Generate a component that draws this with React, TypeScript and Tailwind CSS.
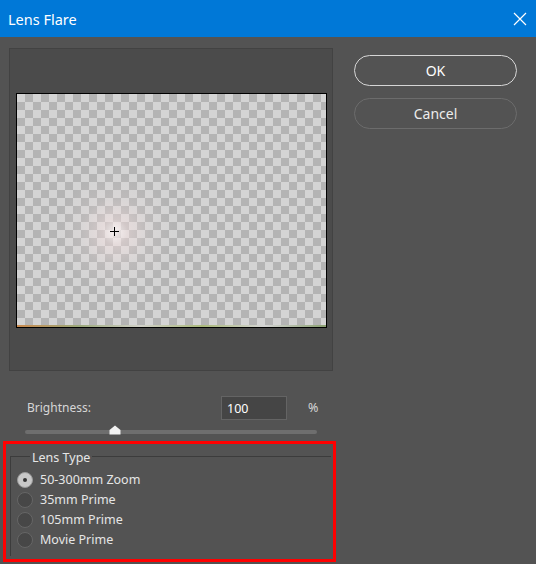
import { useState } from 'react';

const lensTypes = ['50-300mm Zoom', '35mm Prime', '105mm Prime', 'Movie Prime'];

export default function App() {
  const [lens, setLens] = useState<string>(lensTypes[0]);
  const [brightness, setBrightness] = useState<string>('100');

  return (
    <div
      className="w-[536px] h-[564px] bg-[#535353] flex flex-col overflow-hidden text-[#e6e6e6]"
      style={{ fontFamily: '"Noto Sans", "Open Sans", sans-serif' }}
    >
      {/* Заголовок окна */}
      <div className="h-[37px] bg-[#0078d7] flex items-center justify-between pl-[8px] pr-[9px] text-white">
        <span className="text-[14.5px] leading-none mt-[2px]">Lens Flare</span>
        <svg width="14" height="14" viewBox="0 0 14 14" className="mt-[1px]">
          <path d="M1 1 L13 13 M13 1 L1 13" stroke="white" strokeWidth="1.2" fill="none" />
        </svg>
      </div>

      <div className="flex">
        {/* Левая колонка: превью и параметры */}
        <div className="flex flex-col pl-[3px]">
          <div className="ml-[6px] mt-[11px] w-[324px] h-[323px] bg-[#4b4b4b] border border-[#424242] pl-[6px] pt-[44px]">
            <div className="relative w-[311px] h-[235px] border border-black overflow-hidden bg-[repeating-conic-gradient(#b4b4b4_0%_25%,#d4d4d4_0%_50%)] bg-size-[16px_16px]">
              <div className="absolute left-[38px] top-[78px] w-[120px] h-[120px] rounded-full bg-[radial-gradient(circle,rgba(255,248,248,0.8)_0%,rgba(255,230,230,0.4)_15%,rgba(255,232,232,0.12)_40%,transparent_70%)]" />
              <div className="absolute left-[93px] top-[133px] w-[9px] h-[9px]">
                <div className="absolute left-[4px] top-0 w-px h-[9px] bg-black" />
                <div className="absolute left-0 top-[4px] w-[9px] h-px bg-black" />
              </div>
              <div className="absolute left-0 right-0 bottom-0 h-[2px] bg-[linear-gradient(90deg,#c98a4e,#9aa87a_20%,#d0d0c8_40%,#a9b87a_60%,#d4d4d4_80%,#8aa070)]" />
            </div>
          </div>

          {/* Яркость */}
          <div className="flex items-center mt-[25px] h-[24px]">
            <span className="ml-[24px] w-[194px] text-[12px] text-[#d6d6d6]">Brightness:</span>
            <input
              value={brightness}
              onChange={(e) => setBrightness(e.target.value)}
              className="w-[66px] h-[24px] bg-[#454545] border border-[#646464] px-[5px] text-[12.5px] text-white outline-none"
            />
            <span className="ml-[21px] text-[12.5px] text-[#d6d6d6]">%</span>
          </div>
          <div className="relative ml-[22px] mt-[10px] w-[292px] h-[4px] rounded-full bg-[#6e6e6e]">
            <svg width="12" height="10" viewBox="0 0 12 10" className="absolute left-[84px] top-[-5px]">
              <path d="M6 0.5 L11.5 5 L11.5 9.5 L0.5 9.5 L0.5 5 Z" fill="#f2f2f2" />
            </svg>
          </div>

          {/* Тип объектива */}
          <div className="mt-[7px] w-[333px] h-[121px] border-[3px] border-[#ff0000] pl-[4px] pt-[12px]">
            <fieldset className="relative w-[321px] h-[100px] border-l border-t border-[#3c3c3c]">
              <span className="absolute left-[19px] top-[-8px] px-[2px] bg-[#535353] text-[12.5px] leading-[18px] text-[#e6e6e6]">
                Lens Type
              </span>
              <div className="flex flex-col pt-[13px] pl-[6px]">
                {lensTypes.map((t) => (
                  <label key={t} className="flex items-center h-[20px] cursor-pointer" onClick={() => setLens(t)}>
                    {lens === t ? (
                      <span className="w-[16px] h-[16px] rounded-full bg-[#c8c8c8] border border-[#9a9a9a] flex items-center justify-center">
                        <span className="w-[4px] h-[4px] rounded-full bg-[#333]" />
                      </span>
                    ) : (
                      <span className="w-[16px] h-[16px] rounded-full bg-[#474747] border border-[#666]" />
                    )}
                    <span className="ml-[7px] text-[12.5px] text-[#e6e6e6]">{t}</span>
                  </label>
                ))}
              </div>
            </fieldset>
          </div>
        </div>

        {/* Кнопки */}
        <div className="flex flex-col ml-[18px] mt-[18px] gap-[12px]">
          <button className="w-[163px] h-[31px] rounded-full border-[1.5px] border-[#d6d6d6] text-[14px] text-white">
            OK
          </button>
          <button className="w-[163px] h-[31px] rounded-full border border-[#6c6c6c] text-[14px] text-[#ececec]">
            Cancel
          </button>
        </div>
      </div>
    </div>
  );
}
